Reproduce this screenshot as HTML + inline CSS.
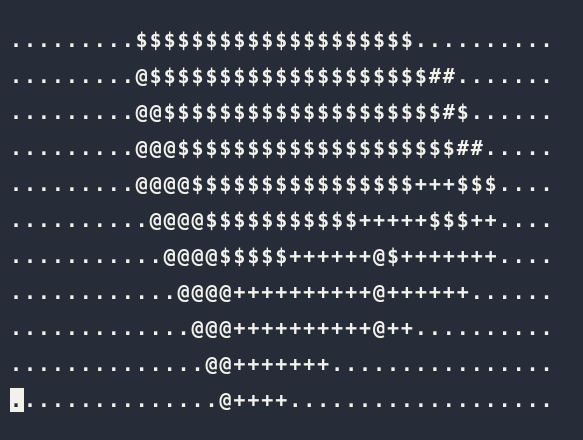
<!DOCTYPE html>
<html><head><meta charset="utf-8"><style>
html,body{margin:0;padding:0;background:#272c39;width:583px;height:440px;overflow:hidden}
pre{margin:0;position:absolute;left:10px;top:22px;font-family:"DejaVu Sans Mono","Liberation Mono",monospace;font-weight:bold;font-size:20px;letter-spacing:1.92px;line-height:36px;color:#f2f2ea}
.c{background:#f2f2ea;color:#272c39}
</style></head><body>
<pre>.........$$$$$$$$$$$$$$$$$$$$..........
.........@$$$$$$$$$$$$$$$$$$$$##.......
.........@@$$$$$$$$$$$$$$$$$$$$#$......
.........@@@$$$$$$$$$$$$$$$$$$$$##.....
.........@@@@$$$$$$$$$$$$$$$$+++$$$....
..........@@@@$$$$$$$$$$$+++++$$$++....
...........@@@@$$$$$++++++@$+++++++....
............@@@@++++++++++@++++++......
.............@@@++++++++++@++..........
..............@@+++++++................
<span class="c">.</span>..............@++++...................</pre>
</body></html>
